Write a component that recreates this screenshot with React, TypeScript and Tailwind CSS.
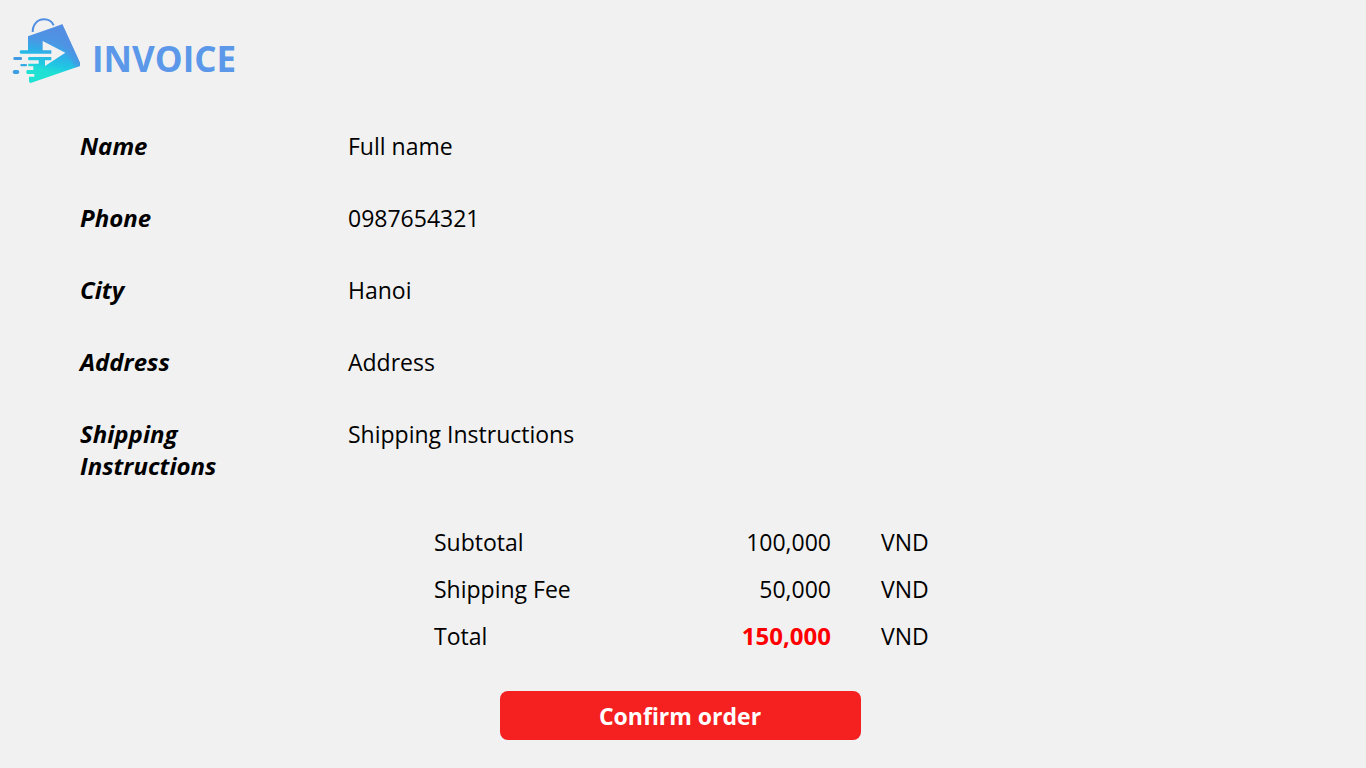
const details = [
  { label: "Name", value: "Full name" },
  { label: "Phone", value: "0987654321" },
  { label: "City", value: "Hanoi" },
  { label: "Address", value: "Address" },
  { label: "Shipping Instructions", value: "Shipping Instructions" },
];

const amounts = [
  { label: "Subtotal", value: "100,000", total: false },
  { label: "Shipping Fee", value: "50,000", total: false },
  { label: "Total", value: "150,000", total: true },
];

function Logo() {
  return (
    <svg viewBox="0 0 240 240" className="size-20 shrink-0" aria-hidden="true">
      <defs>
        <linearGradient id="bag" gradientUnits="userSpaceOnUse" x1="150" y1="62" x2="118" y2="200">
          <stop offset="0" stopColor="#528fe3" />
          <stop offset="0.25" stopColor="#4b97e4" />
          <stop offset="0.48" stopColor="#2cb0e8" />
          <stop offset="0.7" stopColor="#20c8e2" />
          <stop offset="0.85" stopColor="#20dfd5" />
          <stop offset="1" stopColor="#20e2d2" />
        </linearGradient>
        <linearGradient id="side" gradientUnits="userSpaceOnUse" x1="190" y1="138" x2="232" y2="118">
          <stop offset="0" stopColor="#528fe3" stopOpacity="0" />
          <stop offset="1" stopColor="#528fe3" />
        </linearGradient>
      </defs>
      <path d="M98 66C98 44 112 28 132 28C146 28 156 35 161 46" fill="none" stroke="#528fe3" strokeWidth="6" />
      <path
        d="M84 79L187 43L240 158V168L92 219Q88 219 87 214V200H103V192H81Q76 186 81 180H100V169H86Q82 165 86 161H116V151H86Q82 146 86 141H154V151H135V168L196 128L128 93V121H154V131H62Q56 126 62 121H84Z"
        fill="url(#bag)"
      />
      <path d="M165 51L187 43L240 158V168L226 173L200 135L196 126Z" fill="url(#side)" />
      <rect x="40" y="141" width="26" height="9" rx="4" fill="#4199e1" />
      <rect x="61" y="162" width="20" height="7" rx="3" fill="#38aae3" />
      <rect x="38" y="180" width="20" height="12" rx="6" fill="#3d9ee3" />
    </svg>
  );
}

export default function App() {
  return (
    <main className="min-h-screen bg-[#f1f1f1] pt-2.5 pb-7 font-['Open_Sans','Noto_Sans',sans-serif] text-[23px] leading-8 text-black">
      <header className="flex items-center gap-3">
        <Logo />
        <h1 className="pt-[18px] text-[35px] leading-12 font-bold text-[#5b98e9]">INVOICE</h1>
      </header>
      <dl className="mt-10 flex flex-col gap-10 px-20">
        {details.map((row) => (
          <div key={row.label} className="flex gap-27">
            <dt className="w-40 text-[24px] font-bold italic">{row.label}</dt>
            <dd className="flex-1">{row.value}</dd>
          </div>
        ))}
      </dl>
      <table className="mx-auto mt-9 border-collapse">
        <tbody>
          {amounts.map((row) => (
            <tr key={row.label} className="h-[47px]">
              <th scope="row" className="w-[200px] text-left font-normal">{row.label}</th>
              <td className={row.total ? "w-[197px] text-right text-[24px] font-bold text-[#ff0000]" : "w-[197px] text-right"}>
                {row.value}
              </td>
              <td className="w-[101px] pl-[50px]">VND</td>
            </tr>
          ))}
        </tbody>
      </table>
      <div className="mt-8 flex justify-center pr-1.5">
        <button
          type="button"
          className="h-[49px] w-[361px] rounded-lg bg-[#f52020] font-bold text-white"
        >
          Confirm order
        </button>
      </div>
    </main>
  );
}
